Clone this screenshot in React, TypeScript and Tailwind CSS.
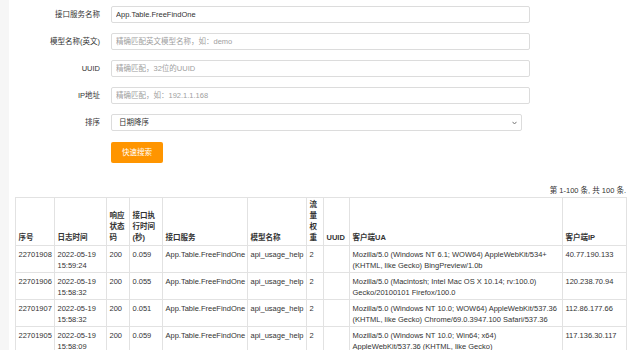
import React from 'react';

const fields = [
  { label: '接口服务名称', value: 'App.Table.FreeFindOne', placeholder: '' },
  { label: '模型名称(英文)', value: '', placeholder: '精确匹配英文模型名称，如：demo' },
  { label: 'UUID', value: '', placeholder: '精确匹配，32位的UUID' },
  { label: 'IP地址', value: '', placeholder: '精确匹配，如：192.1.1.168' },
];

const rows = [
  {
    id: '22701908',
    time: ['2022-05-19', '15:59:24'],
    code: '200',
    cost: '0.059',
    ip: '40.77.190.133',
    ua: ['Mozilla/5.0 (Windows NT 6.1; WOW64) AppleWebKit/534+', '(KHTML, like Gecko) BingPreview/1.0b'],
  },
  {
    id: '22701906',
    time: ['2022-05-19', '15:58:32'],
    code: '200',
    cost: '0.055',
    ip: '120.238.70.94',
    ua: ['Mozilla/5.0 (Macintosh; Intel Mac OS X 10.14; rv:100.0)', 'Gecko/20100101 Firefox/100.0'],
  },
  {
    id: '22701907',
    time: ['2022-05-19', '15:58:32'],
    code: '200',
    cost: '0.051',
    ip: '112.86.177.66',
    ua: ['Mozilla/5.0 (Windows NT 10.0; WOW64) AppleWebKit/537.36', '(KHTML, like Gecko) Chrome/69.0.3947.100 Safari/537.36'],
  },
  {
    id: '22701905',
    time: ['2022-05-19', '15:58:09'],
    code: '200',
    cost: '0.059',
    ip: '117.136.30.117',
    ua: ['Mozilla/5.0 (Windows NT 10.0; Win64; x64)', 'AppleWebKit/537.36 (KHTML, like Gecko)', 'Chrome/101.0.4951.67 Safari/537.36'],
  },
];

const cols = [39, 52, 23, 33, 85, 59, 17, 26, 213, 64];

const headers: React.ReactNode[] = [
  '序号',
  '日志时间',
  <>响应<br />状态<br />码</>,
  <>接口执<br />行时间<br />(秒)</>,
  '接口服务',
  '模型名称',
  <>流<br />量<br />权<br />重</>,
  'UUID',
  '客户端UA',
  '客户端IP',
];

function Lines({ items }: { items: string[] }) {
  return (
    <>
      {items.map((t, i) => (
        <div key={i} className="whitespace-nowrap">{t}</div>
      ))}
    </>
  );
}

export default function App() {
  return (
    <div
      className="flex w-[640px] h-[350px] overflow-hidden bg-white text-[7.5px] leading-[11px] text-[#333]"
      style={{ fontFamily: '"Liberation Sans", "Noto Sans CJK SC", sans-serif' }}
    >
      {/* left gutter */}
      <div className="w-[9px] shrink-0 bg-[#f6f6f6]" />

      <div className="flex-1 flex flex-col pt-[6px]">
        {/* search form */}
        <div className="flex flex-col gap-[10px]">
          {fields.map((f) => (
            <div key={f.label} className="flex items-center gap-[11px]">
              <label className="w-[91px] text-right whitespace-nowrap">{f.label}</label>
              <input
                readOnly
                value={f.value}
                placeholder={f.placeholder}
                className="w-[419px] h-[17px] px-[4px] border border-[#dcdcdc] rounded-[2px] text-[7.5px] text-[#333] placeholder:text-[#a0a0a0] outline-none"
              />
            </div>
          ))}
          <div className="flex items-center gap-[11px]">
            <label className="w-[91px] text-right">排序</label>
            <div className="relative w-[411px] h-[17px] border border-[#dcdcdc] rounded-[2px] flex items-center pl-[7px]">
              <span>日期降序</span>
              <svg className="absolute right-[4px] top-[6px]" width="5" height="4" viewBox="0 0 5 4">
                <path d="M0.5 0.8 L2.5 3 L4.5 0.8" fill="none" stroke="#777" strokeWidth="1" />
              </svg>
            </div>
          </div>
        </div>

        <div className="pl-[102px] mt-[11px]">
          <button className="w-[52px] h-[21px] rounded-[2px] bg-[#ff9500] text-white text-[7.5px]">快速搜索</button>
        </div>

        <div className="text-right pr-[14px] mt-[22px] h-[13px]">第 1-100 条, 共 100 条.</div>

        {/* log table */}
        <table className="ml-[6px] mt-[1px] table-fixed border-collapse border border-[#e2e2e2] w-[611px]">
          <colgroup>
            {cols.map((w, i) => (
              <col key={i} style={{ width: w }} />
            ))}
          </colgroup>
          <thead>
            <tr className="h-[48px]">
              {headers.map((h, i) => (
                <th
                  key={i}
                  className="border border-[#e2e2e2] align-bottom text-left font-bold px-[2.5px] pb-[2px] whitespace-nowrap"
                >
                  {h}
                </th>
              ))}
            </tr>
          </thead>
          <tbody>
            {rows.map((r) => (
              <tr key={r.id}>
                <td className="border border-[#e2e2e2] align-top px-[2.5px] pt-[3px] pb-[1px]">{r.id}</td>
                <td className="border border-[#e2e2e2] align-top px-[2.5px] pt-[3px] pb-[1px]"><Lines items={r.time} /></td>
                <td className="border border-[#e2e2e2] align-top px-[2.5px] pt-[3px] pb-[1px]">{r.code}</td>
                <td className="border border-[#e2e2e2] align-top px-[2.5px] pt-[3px] pb-[1px]">{r.cost}</td>
                <td className="border border-[#e2e2e2] align-top px-[2.5px] pt-[3px] pb-[1px] whitespace-nowrap">App.Table.FreeFindOne</td>
                <td className="border border-[#e2e2e2] align-top px-[2.5px] pt-[3px] pb-[1px] whitespace-nowrap">api_usage_help</td>
                <td className="border border-[#e2e2e2] align-top px-[2.5px] pt-[3px] pb-[1px]">2</td>
                <td className="border border-[#e2e2e2] align-top px-[2.5px] pt-[3px] pb-[1px]"></td>
                <td className="border border-[#e2e2e2] align-top px-[2.5px] pt-[3px] pb-[1px]"><Lines items={r.ua} /></td>
                <td className="border border-[#e2e2e2] align-top px-[2.5px] pt-[3px] pb-[1px]">{r.ip}</td>
              </tr>
            ))}
          </tbody>
        </table>
      </div>
    </div>
  );
}
